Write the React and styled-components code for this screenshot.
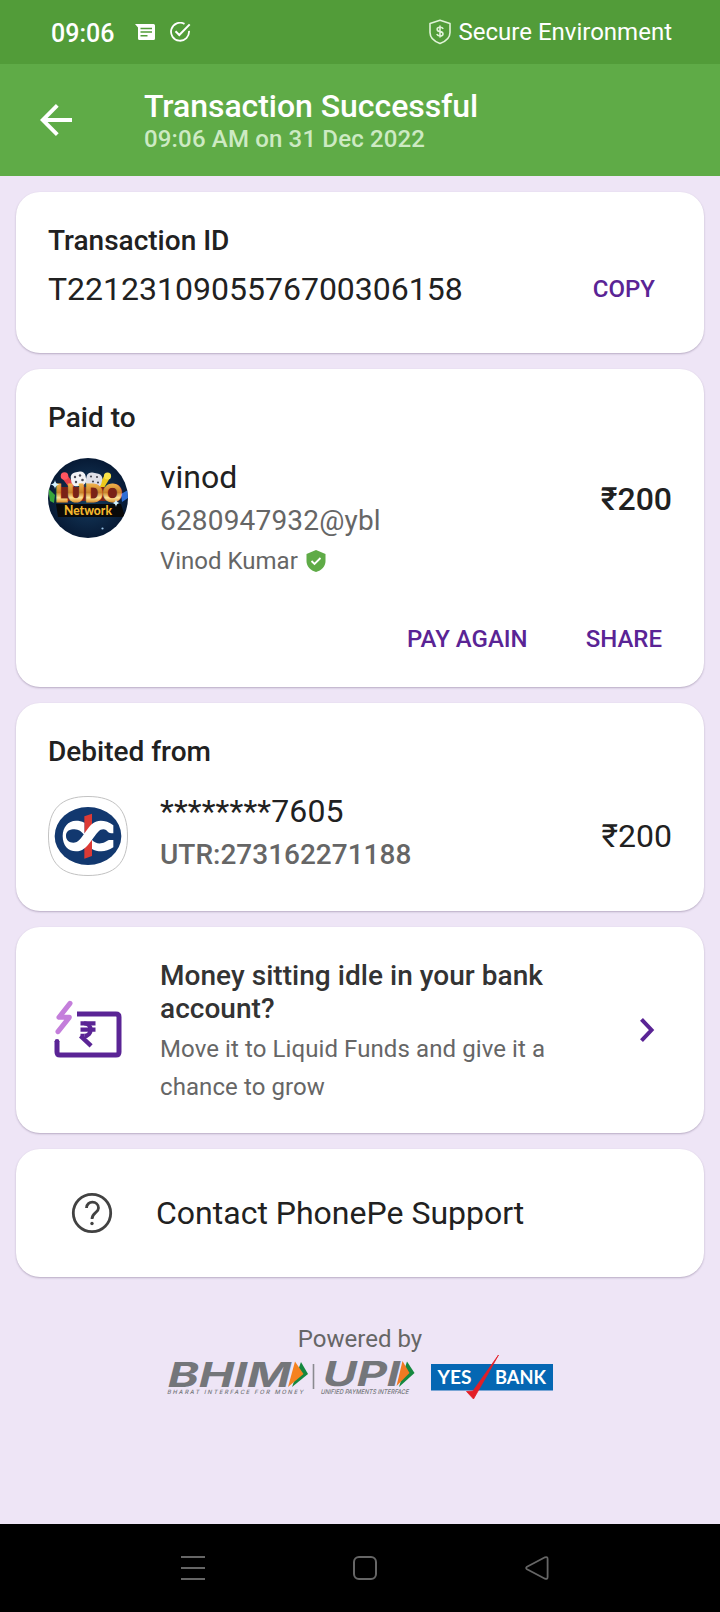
import React from "react";
import styled, { createGlobalStyle } from "styled-components";
import { IndianRupee } from "lucide-react";

const GlobalStyle = createGlobalStyle`
  * { box-sizing: border-box; }
  body {
    margin: 0;
    background: #eee5f6;
    font-family: Roboto, "Noto Sans", sans-serif;
    color: #212121;
  }
  svg { display: block; flex: none; }
`;

const Screen = styled.div`
  width: 720px;
  height: 1612px;
  display: flex;
  flex-direction: column;
  background: #eee5f6;
`;

const StatusBar = styled.div`
  height: 64px;
  flex: none;
  display: flex;
  align-items: center;
  padding: 0 48px 0 51px;
  background: #529c39;
  color: #fff;
`;

const Clock = styled.span`
  font-size: 25px;
  line-height: 30px;
  font-weight: 500;
  width: 84px;
  padding-top: 3px;
`;

const StatusIcons = styled.div`
  display: flex;
  align-items: center;
  gap: 15px;
`;

const Secure = styled.div`
  margin-left: auto;
  display: flex;
  align-items: center;
  gap: 7px;
  font-size: 24px;
  line-height: 28px;
`;

const Header = styled.header`
  height: 112px;
  flex: none;
  display: flex;
  align-items: center;
  padding-left: 40px;
  background: #5fab47;
  color: #fff;
`;

const HeaderText = styled.div`
  margin-left: 72px;
`;

const HeaderTitle = styled.h1`
  margin: 0;
  font-size: 32px;
  line-height: 38px;
  font-weight: 500;
  letter-spacing: -0.05px;
`;

const HeaderTime = styled.div`
  font-size: 24px;
  line-height: 28px;
  font-weight: 500;
  letter-spacing: 0.16px;
  color: #cdeac3;
`;

const Content = styled.main`
  flex: 1;
  display: flex;
  flex-direction: column;
  gap: 16px;
  padding: 16px 16px 0;
`;

const Card = styled.section`
  height: ${(p) => p.$height}px;
  flex: none;
  padding: 32px 32px 0;
  border-radius: 24px;
  background: #fff;
  box-shadow: 0 1px 2px rgba(60, 40, 80, 0.3);
`;

const CardTitle = styled.h2`
  margin: 0;
  font-size: 28px;
  line-height: 33px;
  font-weight: 500;
`;

const Row = styled.div`
  display: flex;
  align-items: ${(p) => p.$align || "center"};
  margin-top: ${(p) => p.$top || 0}px;
`;

const Lead = styled.div`
  width: 112px;
  flex: none;
  padding-top: ${(p) => p.$top || 0}px;
`;

const Primary = styled.div`
  font-size: 32px;
  line-height: 38px;
  letter-spacing: ${(p) => p.$tracking || 0}px;
`;

const Secondary = styled.div`
  margin-top: 8px;
  font-size: 28px;
  line-height: 33px;
  font-weight: ${(p) => (p.$strong ? 500 : 400)};
  letter-spacing: ${(p) => p.$tracking || 0}px;
  color: #666;
`;

const VerifiedName = styled.div`
  display: flex;
  align-items: center;
  gap: 8px;
  margin-top: 10px;
  font-size: 24px;
  line-height: 28px;
  color: #666;
`;

const Amount = styled.div`
  margin-left: auto;
  padding-top: ${(p) => p.$top}px;
  font-size: 32px;
  line-height: 38px;
  font-weight: ${(p) => (p.$strong ? 500 : 400)};
`;

const TextButton = styled.button`
  border: 0;
  padding: 0;
  background: none;
  font: 500 24px/28px Roboto, sans-serif;
  color: #5a2495;
`;

const CopySlot = styled.div`
  display: flex;
  margin-left: auto;
  padding-right: 17px;
`;

const Actions = styled.div`
  display: flex;
  justify-content: flex-end;
  gap: 58px;
  margin-top: 50px;
  padding-right: 10px;
`;

const Promo = styled.div`
  width: 400px;
`;

const PromoTitle = styled(CardTitle)`
  color: #333;
  letter-spacing: 0.04px;
`;

const PromoBody = styled.p`
  margin: 5px 0 0;
  font-size: 24px;
  line-height: 38px;
  letter-spacing: 0.09px;
  color: #666;
`;

const ChevronSlot = styled.div`
  margin: 0 17px 0 auto;
  padding-top: 59px;
`;

const Support = styled.div`
  height: 64px;
  display: flex;
  align-items: center;
  gap: 43px;
  padding-left: 23px;
`;

const Powered = styled.footer`
  display: flex;
  flex-direction: column;
  align-items: center;
  margin-top: 32px;
  font-size: 24px;
  line-height: 28px;
  color: #666;
`;

const NavBar = styled.nav`
  height: 88px;
  flex: none;
  display: flex;
  align-items: center;
  gap: 148px;
  padding-left: 181px;
  background: #000;
`;

const MessageIcon = () => (
  <svg width="20" height="18" viewBox="0 0 20 18">
    <path fill="#fff" d="M0 1H18.5Q20 1 20 2.5V15.500Q20 17 18.500 17H4.500Q3 17 3 15.500V4.500Z" />
    <path stroke="#529c39" strokeWidth="1.5" d="M5.500 5.500H17M5.500 9H17M5.500 12.700H12.500" />
  </svg>
);

const CheckCircle = () => (
  <svg width="21" height="20" viewBox="0 0 21 20" fill="none" stroke="#fff" strokeWidth="1.8">
    <path d="M14.500 1.900A9 9 0 1 0 19 8.800" />
    <path d="M5.500 9.200L9.300 13L19.700 2.400" strokeWidth="2" />
  </svg>
);

const DollarShield = () => (
  <svg width="24" height="26" viewBox="0 0 24 26" fill="none" stroke="#e0f3d8" strokeWidth="1.6">
    <path d="M12 1.300L22 4.500V13.500C22 18.500 17.500 22.500 12 24.500C6.500 22.500 2 18.500 2 13.500V4.500Z" strokeLinejoin="round" />
    <path d="M15.200 9.800C14.700 8.700 13.500 8.300 12 8.300C8.200 8.300 8.200 12.200 12 12.600C16 13 16 16.900 12 16.900C10.300 16.900 9.200 16.300 8.800 15.100M12 6.600V18.600" />
  </svg>
);

const BackArrow = () => (
  <svg width="32" height="32" viewBox="0 0 32 32" fill="none" stroke="#fff" strokeWidth="3.900">
    <path d="M32 16H3M17.300 1.400L2.700 16L17.300 30.600" />
  </svg>
);

const LudoAvatar = () => (
  <svg width="80" height="80" viewBox="0 0 80 80">
    <defs>
      <clipPath id="face"><circle cx="40" cy="40" r="40" /></clipPath>
      <radialGradient id="night">
        <stop offset="0" stopColor="#173f63" />
        <stop offset="1" stopColor="#071a35" />
      </radialGradient>
      <linearGradient id="gold" x1="0" y1="0" x2="0" y2="1">
        <stop offset="0.200" stopColor="#f0b24a" />
        <stop offset="0.500" stopColor="#c9822c" />
        <stop offset="0.680" stopColor="#ffe495" />
        <stop offset="0.850" stopColor="#d98a25" />
      </linearGradient>
    </defs>
    <g clipPath="url(#face)">
      <rect width="80" height="80" fill="url(#night)" />
      <path d="M0 30L7 37L6 45L2 43Z" fill="#37a53c" />
      <path d="M80 32L73 36L74 44L80 40Z" fill="#2e6fd6" />
      <path d="M8 46H73L77 59H10Z" fill="#090909" />
      <path d="M17 19L23 27" stroke="#e8424a" strokeWidth="6" strokeLinecap="round" />
      <circle cx="16.500" cy="18" r="3.800" fill="#ff5560" />
      <path d="M59 19L53 29" stroke="#edc91c" strokeWidth="6" strokeLinecap="round" />
      <circle cx="59.500" cy="18" r="3.600" fill="#f9e34a" />
      <rect x="23" y="14" width="15" height="14" rx="5" fill="#f3f3f6" transform="rotate(-10 30 21)" />
      <rect x="38" y="15" width="16" height="14" rx="5" fill="#dedfe8" transform="rotate(12 46 22)" />
      <g fill="#4a4a55">
        <circle cx="27" cy="19" r="1.200" /><circle cx="32" cy="17.500" r="1.200" />
        <circle cx="28" cy="24" r="1.200" /><circle cx="34.500" cy="22" r="1.300" />
        <circle cx="43" cy="18.500" r="1.100" /><circle cx="49" cy="19" r="1.100" />
        <circle cx="45" cy="23.500" r="1.100" /><circle cx="50" cy="24.500" r="1.100" />
      </g>
      <path d="M10 29H70V43H10Z" fill="#7a2216" />
      <text x="7" y="44" fontFamily="Lato, sans-serif" fontWeight="900" fontSize="24" textLength="67" lengthAdjust="spacingAndGlyphs" fill="url(#gold)" stroke="url(#gold)" strokeWidth="1">LUDO</text>
      <text x="16" y="57" fontFamily="Lato, sans-serif" fontWeight="900" fontSize="12.500" textLength="48" lengthAdjust="spacingAndGlyphs" fill="#f3b62d">Network</text>
      <path d="M7 22Q7.500 26 11.500 26.500Q7.500 27 7 31Q6.500 27 2.500 26.500Q6.500 26 7 22ZM68 41Q68.400 44.600 71.500 45Q68.400 45.400 68 49Q67.600 45.400 64.500 45Q67.600 44.600 68 41Z" fill="#d5f2ff" />
      <circle cx="54.500" cy="70.500" r="1.100" fill="#9ac3e6" />
    </g>
  </svg>
);

const BankLogo = () => (
  <svg width="80" height="80" viewBox="54 48 240 240">
    <path d="M174 49.500C255 49.500 292.500 87 292.500 168S255 286.500 174 286.500S55.500 249 55.500 168S93 49.500 174 49.500Z" fill="#fff" stroke="#c2c2c2" strokeWidth="3" />
    <ellipse cx="174" cy="168" rx="100" ry="87" fill="#12386f" />
    <path d="M163 109L186 101V228L163 236Z" fill="#dc3a35" />
    <path fill="#fff" d="M163 128C155 123 147 122 138 122C114 122 98 142 98 168C98 196 114 214 138 214C175 214 188 165 212 149C222 145 230 149 234 156Q237 160 250 160V136C238 126 225 122 212 122C176 122 165 170 140 186C125 192 108 184 108 168C108 152 120 148 134 148C146 148 155 155 163 165Z" />
    <path fill="#fff" d="M186 180C195 190 207 192 217 189C228 187 231 180 241 180H250V202C238 210 225 214 214 214C203 214 193 211 186 207Z" />
  </svg>
);

const VerifiedShield = () => (
  <svg width="20" height="22" viewBox="0 0 20 22">
    <path fill="#5fab47" d="M10 0L19.500 4V11C19.500 16.500 15.500 20.500 10 22C4.500 20.500 0.500 16.500 0.500 11V4Z" />
    <path fill="none" stroke="#fff" strokeWidth="1.800" d="M5.500 11L8.500 14L14.500 8" />
  </svg>
);

const FundsIcon = () => (
  <svg width="80" height="80" viewBox="54 39 240 240" fill="none" strokeLinecap="round" strokeLinejoin="round">
    <path stroke="#5a2495" strokeWidth="15" strokeLinecap="butt" d="M141 102H258Q267 102 267 111V216Q267 225 258 225H90Q81 225 81 216V184" />
    <circle cx="81" cy="184" r="7" fill="#5a2495" />
    <path stroke="#c47edb" strokeWidth="15" d="M120 70L87 112H118L84 155" />
    <IndianRupee x="129" y="119" width="90" height="90" color="#5a2495" strokeWidth={3.5} strokeLinecap="butt" />
  </svg>
);

const Chevron = () => (
  <svg width="15" height="24" viewBox="0 0 15 24" fill="none" stroke="#5a2495" strokeWidth="4">
    <path d="M1.500 1.400L11.500 12L1.500 22.600" />
  </svg>
);

const HelpIcon = () => (
  <svg width="42" height="42" viewBox="0 0 42 42" fill="none" stroke="#424242" strokeWidth="2.800">
    <circle cx="21" cy="21" r="18.700" />
    <path d="M15.500 16C15.500 8 27.500 8.500 27.500 16C27.500 21 21 20.500 21 27" strokeWidth="2.800" />
    <circle cx="21" cy="31.500" r="1.700" fill="#424242" stroke="none" />
  </svg>
);

const PartnerLogos = () => (
  <svg width="388" height="48" viewBox="167 1353 388 48">
    <g fill="#74767a" fontFamily="Inter, sans-serif" fontWeight="700">
      <g transform="translate(166.500 1386.700) skewX(-14)">
        <text fontSize="34.500" textLength="123" lengthAdjust="spacingAndGlyphs">BHIM</text>
      </g>
      <g transform="translate(321.500 1386) skewX(-14)">
        <text fontSize="34.500" textLength="77" lengthAdjust="spacingAndGlyphs">UPI</text>
      </g>
      <g fontWeight="500">
        <g transform="translate(168 1393.500) skewX(-14)">
          <text fontSize="5.800" textLength="136" lengthAdjust="spacing">BHARAT INTERFACE FOR MONEY</text>
        </g>
        <g transform="translate(321.500 1393.500) skewX(-14)">
          <text fontSize="6.400" textLength="88" lengthAdjust="spacingAndGlyphs">UNIFIED PAYMENTS INTERFACE</text>
        </g>
      </g>
    </g>
    <path d="M302 1362L309 1374L293 1387Z" fill="#15883f" />
    <path d="M296 1361.500L304.500 1374L289 1387Z" fill="#f58220" />
    <path d="M408 1361.500L415.500 1373L400 1387Z" fill="#15883f" />
    <path d="M403.500 1361L410.500 1373L397.500 1386Z" fill="#f07a22" />
    <path d="M314.500 1364V1389" stroke="#8a8a90" strokeWidth="1.600" />
    <rect x="432" y="1364" width="122" height="26.500" fill="#0567b3" />
    <g fill="#fff" fontFamily="Lato, sans-serif" fontWeight="700" fontSize="19">
      <text x="438.500" y="1384" textLength="34" lengthAdjust="spacingAndGlyphs">YES</text>
      <text x="496" y="1384" textLength="51" lengthAdjust="spacingAndGlyphs">BANK</text>
    </g>
    <path d="M499.500 1355L474.500 1399L467.500 1391.500L474 1391Z" fill="#e31e26" stroke="#e31e26" strokeWidth="0.800" />
  </svg>
);

const MenuNav = () => (
  <svg width="24" height="24" viewBox="0 0 24 24" stroke="#666" strokeWidth="2">
    <path d="M0 1H24M0 12H24M0 23H24" />
  </svg>
);
const HomeNav = () => (
  <svg width="24" height="24" viewBox="0 0 24 24" fill="none" stroke="#666" strokeWidth="2">
    <rect x="1" y="1" width="22" height="22" rx="5" />
  </svg>
);
const BackNav = () => (
  <svg width="24" height="24" viewBox="0 0 24 24" fill="none" stroke="#666" strokeWidth="1.800" strokeLinejoin="round">
    <path d="M2 10.800L20 1.300Q22.600 0.500 22.600 3V21Q22.600 23.500 20 22.700L2 13.200Q0.300 12 2 10.800Z" />
  </svg>
);

export default function App() {
  return (
    <Screen>
      <GlobalStyle />
      <StatusBar>
        <Clock>09:06</Clock>
        <StatusIcons>
          <MessageIcon />
          <CheckCircle />
        </StatusIcons>
        <Secure>
          <DollarShield />
          Secure Environment
        </Secure>
      </StatusBar>
      <Header>
        <BackArrow />
        <HeaderText>
          <HeaderTitle>Transaction Successful</HeaderTitle>
          <HeaderTime>09:06 AM on 31 Dec 2022</HeaderTime>
        </HeaderText>
      </Header>
      <Content>
        <Card $height={161}>
          <CardTitle>Transaction ID</CardTitle>
          <Row $top={13}>
            <Primary>T2212310905576700306158</Primary>
            <CopySlot>
              <TextButton>COPY</TextButton>
            </CopySlot>
          </Row>
        </Card>
        <Card $height={318}>
          <CardTitle>Paid to</CardTitle>
          <Row $top={24} $align="flex-start">
            <Lead><LudoAvatar /></Lead>
            <div>
              <Primary>vinod</Primary>
              <Secondary $tracking={0.18}>6280947932@ybl</Secondary>
              <VerifiedName>
                Vinod Kumar
                <VerifiedShield />
              </VerifiedName>
            </div>
            <Amount $top={22} $strong>₹200</Amount>
          </Row>
          <Actions>
            <TextButton>PAY AGAIN</TextButton>
            <TextButton>SHARE</TextButton>
          </Actions>
        </Card>
        <Card $height={208}>
          <CardTitle>Debited from</CardTitle>
          <Row $top={24} $align="flex-start">
            <Lead $top={4}><BankLogo /></Lead>
            <div>
              <Primary $tracking={0.12}>********7605</Primary>
              <Secondary $strong>UTR:273162271188</Secondary>
            </div>
            <Amount $top={25}>₹200</Amount>
          </Row>
        </Card>
        <Card $height={206}>
          <Row $align="flex-start">
            <Lead $top={34}><FundsIcon /></Lead>
            <Promo>
              <PromoTitle>Money sitting idle in your bank account?</PromoTitle>
              <PromoBody>Move it to Liquid Funds and give it a chance to grow</PromoBody>
            </Promo>
            <ChevronSlot>
              <Chevron />
            </ChevronSlot>
          </Row>
        </Card>
        <Card $height={128}>
          <Support>
            <HelpIcon />
            <Primary>Contact PhonePe Support</Primary>
          </Support>
        </Card>
        <Powered>
          Powered by
          <PartnerLogos />
        </Powered>
      </Content>
      <NavBar>
        <MenuNav />
        <HomeNav />
        <BackNav />
      </NavBar>
    </Screen>
  );
}
